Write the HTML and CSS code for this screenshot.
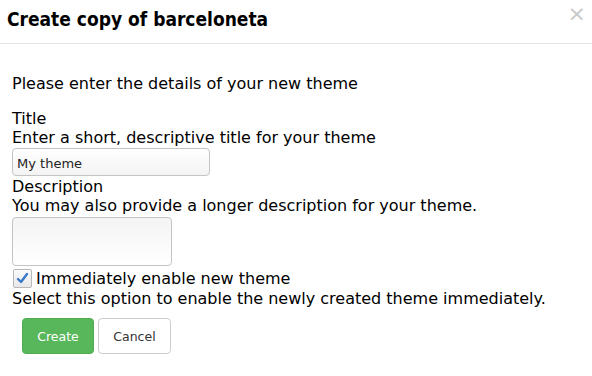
FILE: index.html
```html
<!DOCTYPE html>
<html>
<head>
<meta charset="utf-8">
<link rel="stylesheet" href="styles.css">
</head>
<body>
<div class="modal">
  <div class="modal-header">
    <h3 class="modal-title">Create copy of barceloneta</h3>
    <span class="close">×</span>
  </div>
  <div class="modal-body">
    <p class="intro">Please enter the details of your new theme</p>
    <div class="field">
      <label class="field-label">Title</label>
      <div class="help">Enter a short, descriptive title for your theme</div>
      <input class="text-input" type="text" value="My theme">
    </div>
    <div class="field">
      <label class="field-label">Description</label>
      <div class="help">You may also provide a longer description for your theme.</div>
      <textarea class="textarea"></textarea>
    </div>
    <div class="field">
      <div class="check-row">
        <span class="checkbox"><svg width="13" height="13" viewBox="0 0 13 13"><path d="M2 7 L5 10 L11 2" fill="none" stroke="#3a78c9" stroke-width="2.4" stroke-linecap="round" stroke-linejoin="round"/></svg></span>
        <span class="check-label">Immediately enable new theme</span>
      </div>
      <div class="help">Select this option to enable the newly created theme immediately.</div>
    </div>
    <div class="actions">
      <button class="btn btn-primary">Create</button>
      <button class="btn btn-default">Cancel</button>
    </div>
  </div>
</div>
</body>
</html>
```
FILE: styles.css
```css
* { box-sizing: border-box; }
html, body { margin: 0; padding: 0; background: #fff; }
body { font-family: "DejaVu Sans", sans-serif; color: #000; width: 592px; height: 376px; overflow: hidden; }
.modal { width: 592px; }
.modal-header {
  position: relative;
  height: 44px;
  border-bottom: 1px solid #e5e5e5;
  padding: 7px 7px 0 7px;
}
.modal-title {
  margin: 0; font-family: "DejaVu Sans Condensed", "DejaVu Sans", sans-serif;
  font-stretch: condensed; font-size: 19px; font-weight: bold; line-height: 24px;
}
.close {
  position: absolute; right: 6px; top: 2px;
  font-size: 22px; color: #c8c8c8; line-height: 24px;
}
.modal-body { padding: 30px 12px 0 12px; }
.intro { margin: 0 0 16px 0; font-size: 16px; line-height: 19px; }
.field { font-size: 16px; line-height: 19px; }
.field-label { display: block; }
.text-input {
  display: block; width: 198px; height: 28px; margin: 1px 0 1px 0;
  border: 1px solid #c4c4c4; border-radius: 4px;
  background: linear-gradient(#ffffff, #f3f3f3);
  font-family: "DejaVu Sans", sans-serif; font-size: 13px; color: #222;
  padding: 2px 4px 0 4px;
}
.textarea {
  display: block; width: 160px; height: 49px; margin: 2px 0 2px 0;
  border: 1px solid #c4c4c4; border-radius: 4px;
  background: linear-gradient(#f4f4f4, #ffffff);
  resize: none; padding: 0;
}
.check-row { display: flex; align-items: center; gap: 4px; height: 21px; }
.checkbox {
  display: inline-flex; align-items: center; justify-content: center;
  width: 19px; height: 19px; margin-left: 1px;
  border: 1px solid #b8b8b8; border-radius: 2px;
  background: linear-gradient(#fbfbfb, #e8e8e8);
}
.actions { display: flex; gap: 4px; padding: 10px 0 0 10px; }
.btn {
  height: 36px; border-radius: 4px; font-family: "DejaVu Sans", sans-serif;
  font-size: 12.5px; padding: 0 12px;
}
.btn-primary { width: 72px; background: #58b65b; border: 1px solid #4ead51; color: #fff; }
.btn-default { width: 73px; background: #fff; border: 1px solid #cccccc; color: #333; }
```
